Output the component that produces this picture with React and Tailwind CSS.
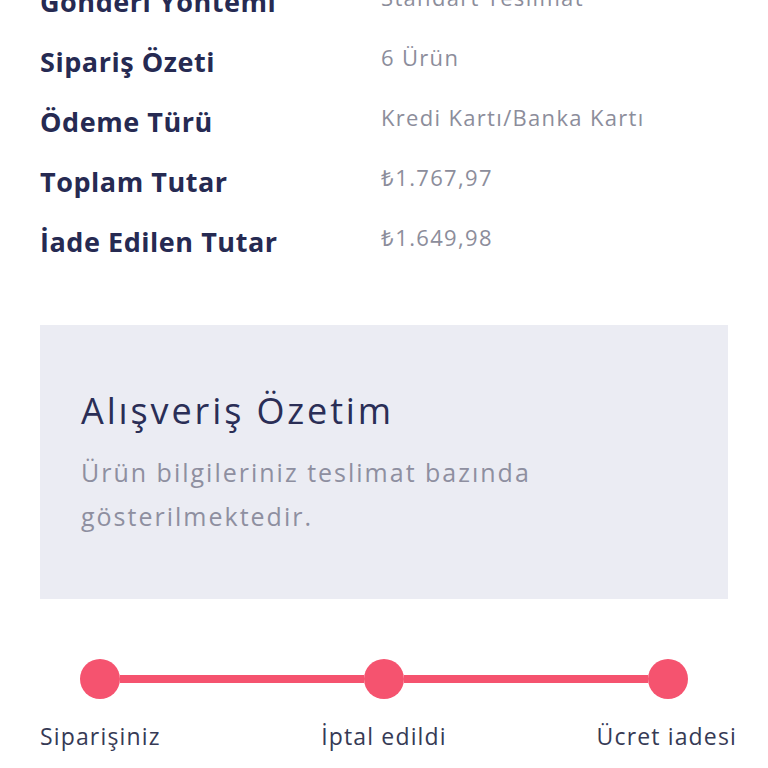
const rows = [
  { label: "Gönderi Yöntemi", value: "Standart Teslimat" },
  { label: "Sipariş Özeti", value: "6 Ürün" },
  { label: "Ödeme Türü", value: "Kredi Kartı/Banka Kartı" },
  { label: "Toplam Tutar", value: "₺1.767,97" },
  { label: "İade Edilen Tutar", value: "₺1.649,98" },
];

const steps = ["Siparişiniz", "İptal edildi", "Ücret iadesi"];

export default function App() {
  return (
    <div className="w-[768px] h-[768px] overflow-hidden bg-white font-['Open_Sans',sans-serif]">
      <div className="px-10 -mt-[16px]">
        {rows.map((row) => (
          <div key={row.label} className="flex h-[60px] items-start">
            <div className="w-[341px] text-[27px] leading-[36px] font-bold tracking-[0.02em] text-[#262a52]">
              {row.label}
            </div>
            <div className="-mt-[2px] text-[22px] leading-[30px] tracking-[0.06em] text-[#8c8d9b]">
              {row.value}
            </div>
          </div>
        ))}
      </div>

      <div className="mx-10 mt-[41px] h-[274px] bg-[#ebecf3] px-[41px] pt-[61px]">
        <h2 className="text-[36px] leading-[50px] tracking-[0.08em] text-[#2a2e56]">Alışveriş Özetim</h2>
        <p className="mt-[14px] text-[25px] leading-[44px] tracking-[0.08em] text-[#8e8fa0]">
          Ürün bilgileriniz teslimat bazında
          <br />
          gösterilmektedir.
        </p>
      </div>

      <div className="mt-[60px] px-20">
        <div className="flex items-center">
          <div className="h-10 w-10 rounded-full bg-[#f5536f]" />
          <div className="h-2 flex-1 bg-[#f5536f]" />
          <div className="h-10 w-10 rounded-full bg-[#f5536f]" />
          <div className="h-2 flex-1 bg-[#f5536f]" />
          <div className="h-10 w-10 rounded-full bg-[#f5536f]" />
        </div>
      </div>

      <div className="mt-[21px] grid grid-cols-3 px-10 text-[23px] leading-[32px] tracking-[0.05em] text-[#363a55]">
        <div>{steps[0]}</div>
        <div className="text-center">{steps[1]}</div>
        <div className="-mr-[9px] text-right">{steps[2]}</div>
      </div>
    </div>
  );
}
